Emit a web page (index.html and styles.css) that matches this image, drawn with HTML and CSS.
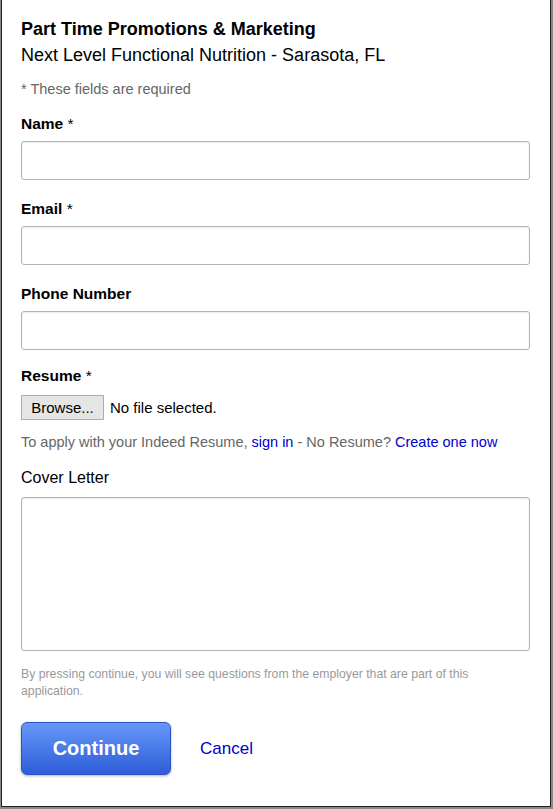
FILE: index.html
```html
<!DOCTYPE html>
<html lang="en">
<head>
    <meta charset="UTF-8">
    <meta name="viewport" content="width=device-width, initial-scale=1.0">
    <title>Apply - Part Time Promotions &amp; Marketing</title>
    <link rel="stylesheet" href="styles.css">
</head>
<body>
    <div class="frame">
        <form class="apply-form" onsubmit="return false;">
            <header class="job-header">
                <h1 class="job-title">Part Time Promotions &amp; Marketing</h1>
                <p class="job-company">Next Level Functional Nutrition - Sarasota, FL</p>
            </header>

            <p class="required-note">* These fields are required</p>

            <div class="field">
                <label class="field-label" for="name">Name <span class="star">*</span></label>
                <input class="text-input" type="text" id="name">
            </div>

            <div class="field">
                <label class="field-label" for="email">Email <span class="star">*</span></label>
                <input class="text-input" type="text" id="email">
            </div>

            <div class="field">
                <label class="field-label" for="phone">Phone Number</label>
                <input class="text-input" type="text" id="phone">
            </div>

            <div class="field field-resume">
                <span class="field-label">Resume <span class="star">*</span></span>
                <div class="file-row">
                    <button type="button" class="browse-btn">Browse...</button>
                    <span class="file-name">No file selected.</span>
                </div>
            </div>

            <p class="resume-hint">To apply with your Indeed Resume, <a href="#">sign in</a> - No Resume? <a href="#">Create one now</a></p>

            <div class="field-cover">
                <label class="cover-label" for="cover">Cover Letter</label>
                <textarea class="cover-input" id="cover"></textarea>
            </div>

            <p class="fine-print">By pressing continue, you will see questions from the employer that are part of this application.</p>

            <div class="actions">
                <button type="submit" class="continue-btn">Continue</button>
                <a href="#" class="cancel-link">Cancel</a>
            </div>
        </form>
    </div>
</body>
</html>
```

FILE: styles.css
```css
body {
    margin: 0;
    padding: 0;
    background-color: #8a8a8a;
    font-family: "Liberation Sans", Arial, sans-serif;
    color: #000;
}

.frame {
    width: 548px;
    height: 806px;
    margin-left: 1px;
    background-color: #fff;
    border: 1px solid #1e1e1e;
    border-top: none;
}

.apply-form {
    display: flex;
    flex-direction: column;
    padding: 16px 20px 0 19px;
}

.job-title {
    margin: 0;
    font-size: 18px;
    font-weight: bold;
    line-height: 26px;
}

.job-company {
    margin: 0;
    font-size: 18px;
    line-height: 26px;
}

.required-note {
    margin: 11px 0 0;
    font-size: 14.5px;
    line-height: 20px;
    color: #666;
}

.field {
    display: flex;
    flex-direction: column;
    margin-top: 15px;
}

.field + .field {
    margin-top: 19px;
}

.field-label {
    font-size: 15.5px;
    font-weight: bold;
    line-height: 20px;
}

.star {
    font-weight: normal;
}

.text-input {
    box-sizing: border-box;
    height: 39px;
    margin: 7px 0 0;
    padding: 4px 8px;
    border: 1px solid #b3b3b3;
    border-radius: 3px;
    box-shadow: inset 0 1px 2px rgba(0, 0, 0, 0.08);
    font-family: inherit;
    font-size: 15px;
}

.field + .field-resume {
    margin-top: 16px;
}

.file-row {
    display: flex;
    align-items: center;
    gap: 6px;
    margin-top: 9px;
}

.browse-btn {
    height: 25px;
    width: 83px;
    padding: 0;
    border: 1px solid #adadad;
    background-color: #e5e5e5;
    font-family: inherit;
    font-size: 15px;
    color: #000;
}

.file-name {
    font-size: 15px;
}

.resume-hint {
    margin: 12px 0 0;
    font-size: 14.5px;
    line-height: 20px;
    color: #666;
}

.resume-hint a {
    color: #0000cc;
    text-decoration: none;
}

.field-cover {
    display: flex;
    flex-direction: column;
    margin-top: 16px;
}

.cover-label {
    font-size: 16px;
    line-height: 20px;
}

.cover-input {
    box-sizing: border-box;
    height: 154px;
    margin-top: 9px;
    border: 1px solid #b3b3b3;
    border-radius: 3px;
    box-shadow: inset 0 1px 2px rgba(0, 0, 0, 0.08);
    resize: none;
    font-family: inherit;
}

.fine-print {
    margin: 15px 0 0;
    width: 470px;
    font-size: 12.25px;
    line-height: 17px;
    color: #999;
}

.actions {
    display: flex;
    align-items: center;
    gap: 29px;
    margin-top: 22px;
}

.continue-btn {
    width: 150px;
    height: 53px;
    border: 1px solid #2c52c4;
    border-radius: 6px;
    background: linear-gradient(#6598f8, #2f5cd9);
    box-shadow: 0 1px 3px rgba(0, 0, 0, 0.3);
    color: #fff;
    font-family: inherit;
    font-size: 20px;
    font-weight: bold;
    cursor: pointer;
}

.cancel-link {
    font-size: 17px;
    color: #0000cc;
    text-decoration: none;
}
```
